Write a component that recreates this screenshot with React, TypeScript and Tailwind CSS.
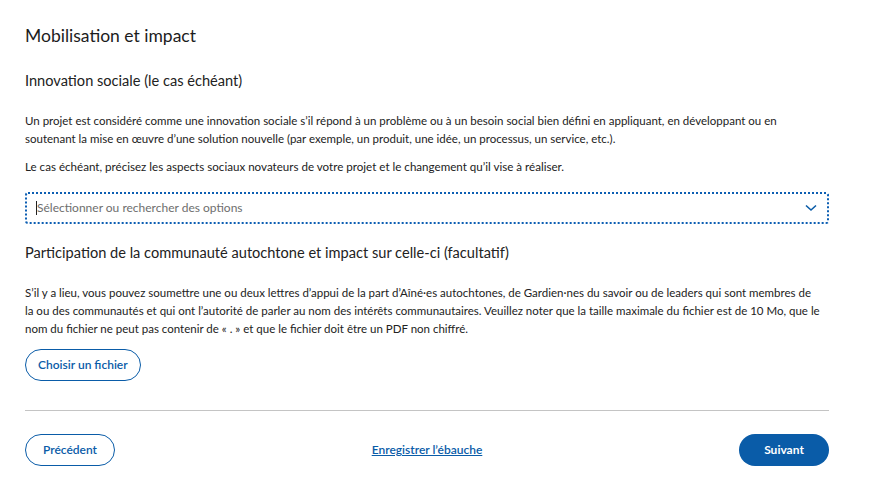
const blue = "text-[#0a5ca8]";

export default function App() {
  return (
    <div className="min-h-screen bg-white font-['Lato','Liberation_Sans',sans-serif] text-[#222]">
      <div className="w-[804px] pl-[25px] pt-[26px] box-content">
        <h1 className="text-[17.5px] leading-[20px] text-[#1c1c1c]">Mobilisation et impact</h1>

        <h2 className="mt-[25px] text-[14.6px] leading-[20px] text-[#222]">Innovation sociale (le cas échéant)</h2>

        <p className="mt-[21px] text-[11.5px] leading-[18px]">
          Un projet est considéré comme une innovation sociale s’il répond à un problème ou à un besoin social bien défini en appliquant, en développant ou en
          <br />
          soutenant la mise en œuvre d’une solution nouvelle (par exemple, un produit, une idée, un processus, un service, etc.).
        </p>
        <p className="mt-[10px] text-[11.6px] leading-[18px]">
          Le cas échéant, précisez les aspects sociaux novateurs de votre projet et le changement qu’il vise à réaliser.
        </p>

        <div className="mt-[16px] flex h-[32px] items-center rounded-[3px] border-2 border-dotted border-[#0d5fb3] pl-[9px] pr-[10px]">
          <span className="h-[14px] w-px bg-[#222]" />
          <span className="flex-1 text-[12px] text-[#6e6e6e]">Sélectionner ou rechercher des options</span>
          <svg width="12" height="8" viewBox="0 0 12 8" fill="none" className={blue}>
            <path d="M1 1.5 L6 6 L11 1.5" stroke="currentColor" strokeWidth="1.6" />
          </svg>
        </div>

        <h2 className="mt-[19px] text-[14.6px] leading-[20px]">Participation de la communauté autochtone et impact sur celle-ci (facultatif)</h2>

        <p className="mt-[21px] text-[11.5px] leading-[18px]">
          S’il y a lieu, vous pouvez soumettre une ou deux lettres d’appui de la part d’Aîné·es autochtones, de Gardien·nes du savoir ou de leaders qui sont membres de
          <br />
          la ou des communautés et qui ont l’autorité de parler au nom des intérêts communautaires. Veuillez noter que la taille maximale du fichier est de 10 Mo, que le
          <br />
          nom du fichier ne peut pas contenir de « . » et que le fichier doit être un PDF non chiffré.
        </p>

        <button className={`mt-[11px] h-[32px] rounded-full border border-[#0a5ca8] px-[12px] text-[12px] font-semibold ${blue}`}>
          Choisir un fichier
        </button>

        <div className="mt-[29px] h-px bg-[#c4c4c4]" />

        <div className="mt-[23px] flex items-center justify-between">
          <button className={`h-[32px] w-[90px] rounded-full border border-[#0a5ca8] text-[12px] font-semibold ${blue}`}>
            Précédent
          </button>
          <a href="#" className={`text-[12px] font-semibold underline ${blue}`}>Enregistrer l’ébauche</a>
          <button className="h-[32px] w-[90px] rounded-full bg-[#0a5ca8] text-[12px] font-bold text-white">Suivant</button>
        </div>
      </div>
    </div>
  );
}
